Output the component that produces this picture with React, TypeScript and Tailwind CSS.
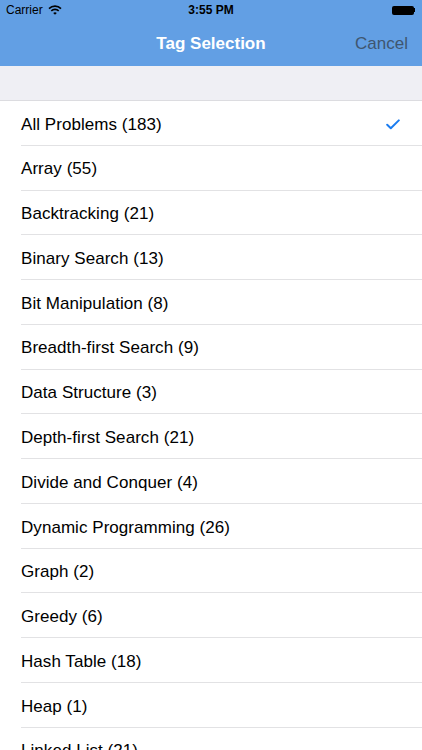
import { useState } from 'react'

const tags = [
    { name: 'All Problems', count: 183 },
    { name: 'Array', count: 55 },
    { name: 'Backtracking', count: 21 },
    { name: 'Binary Search', count: 13 },
    { name: 'Bit Manipulation', count: 8 },
    { name: 'Breadth-first Search', count: 9 },
    { name: 'Data Structure', count: 3 },
    { name: 'Depth-first Search', count: 21 },
    { name: 'Divide and Conquer', count: 4 },
    { name: 'Dynamic Programming', count: 26 },
    { name: 'Graph', count: 2 },
    { name: 'Greedy', count: 6 },
    { name: 'Hash Table', count: 18 },
    { name: 'Heap', count: 1 },
    { name: 'Linked List', count: 21 },
]

function StatusBar() {
    return (
        <div className="relative flex h-[20px] items-center justify-between px-[6px] text-[12px] text-black">
            <div className="flex items-center gap-[5px]">
                <span>Carrier</span>
                <svg width="14" height="10" viewBox="0 0 14 10" aria-hidden="true">
                    <path d="M1 3.6 A8.5 8.5 0 0 1 13 3.6" stroke="black" strokeWidth="1.6" fill="none" />
                    <path d="M3.3 5.9 A5.2 5.2 0 0 1 10.7 5.9" stroke="black" strokeWidth="1.6" fill="none" />
                    <path d="M7 9.8 L5.2 8 A2.6 2.6 0 0 1 8.8 8 Z" fill="black" />
                </svg>
            </div>
            <span className="absolute left-1/2 -translate-x-1/2 font-bold">3:55 PM</span>
            <div className="flex items-center pr-[1px]">
                <div className="h-[9px] w-[22px] rounded-[2px] bg-black" />
                <div className="h-[4px] w-[1.5px] bg-black" />
            </div>
        </div>
    )
}

export default function App() {
    const [selected, setSelected] = useState(0)

    return (
        <div className="h-[750px] w-[422px] overflow-hidden bg-white" style={{ fontFamily: '"Liberation Sans", Arial, sans-serif' }}>
            <div className="bg-[#629fe4]">
                <StatusBar />
                <div className="relative flex h-[45.5px] items-center justify-center pt-[2px]">
                    <span className="text-[17px] font-bold text-white">Tag Selection</span>
                    <button className="absolute right-[14px] text-[17px] text-[#3f5670]">Cancel</button>
                </div>
            </div>
            <div className="h-[35.5px] bg-[#efeff4] border-b border-[#dcdce0]" />
            <ul>
                {tags.map((tag, i) => (
                    <li key={tag.name} className="h-[44.78px] pl-[21px]" onClick={() => setSelected(i)}>
                        <div className="flex h-full items-center justify-between border-b border-[#e2e2e4] pt-[3px] pr-[22px] text-[17px] text-black">
                            <span className="tracking-[0.05px]">{tag.name} ({tag.count})</span>
                            {selected === i ? (
                                <svg width="14" height="11" viewBox="0 0 14 11" aria-hidden="true">
                                    <path d="M1.2 5.8 L4.8 9.2 L12.8 1.4" stroke="#1a7cf0" strokeWidth="2" fill="none" strokeLinecap="round" strokeLinejoin="round" />
                                </svg>
                            ) : null}
                        </div>
                    </li>
                ))}
            </ul>
        </div>
    )
}
